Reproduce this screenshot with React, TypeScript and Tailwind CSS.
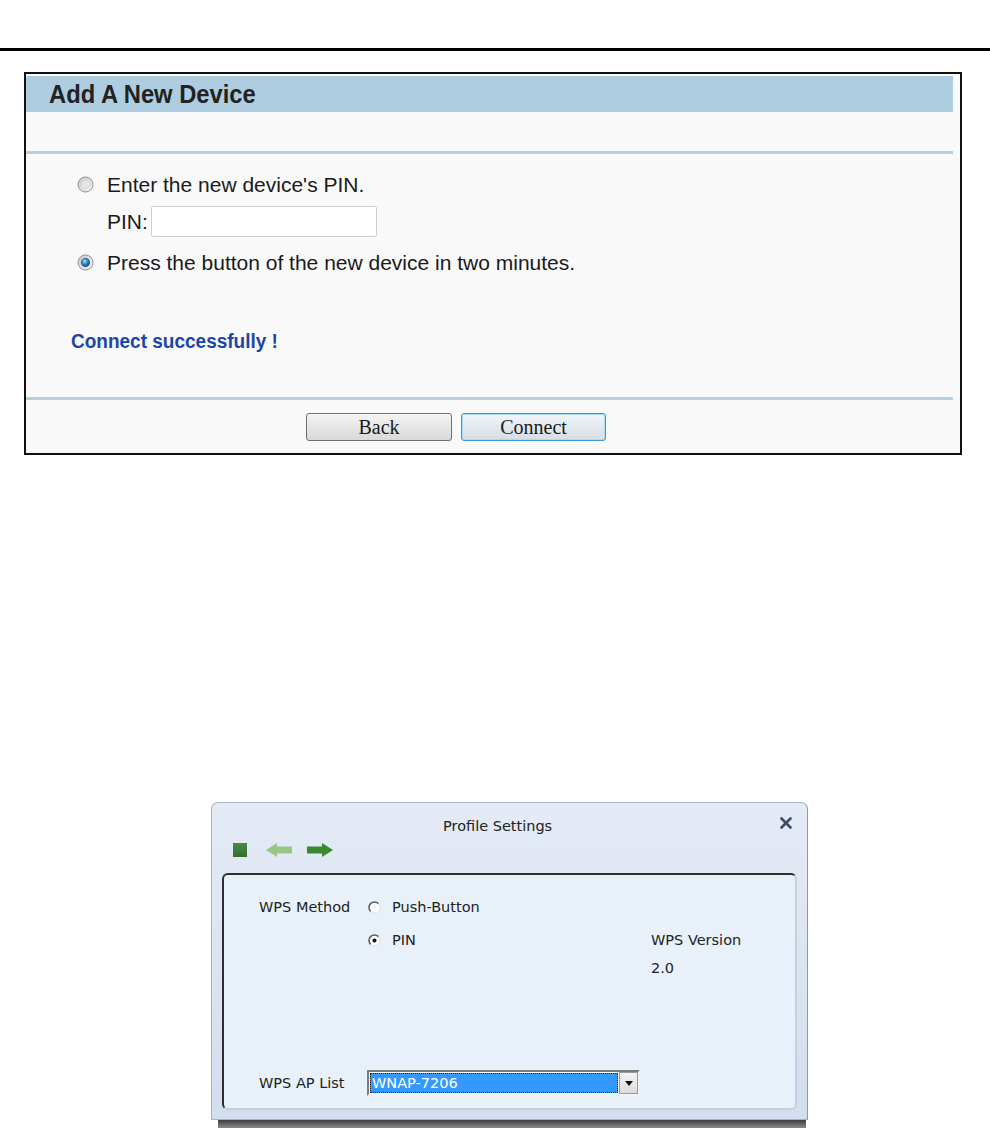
function PanelRadio({ checked, id }: { checked?: boolean; id: string }) {
  return (
    <svg width="17" height="17" viewBox="0 0 17 17" className="shrink-0">
      <defs>
        <linearGradient id={`${id}-ring`} x1="0" y1="0" x2="1" y2="1">
          <stop offset="0" stopColor="#c8c8c8" />
          <stop offset="1" stopColor="#f8f8f8" />
        </linearGradient>
        <radialGradient id={`${id}-dot`} cx="0.4" cy="0.35" r="0.7">
          <stop offset="0" stopColor="#a6e0fb" />
          <stop offset="0.5" stopColor="#2b8bc9" />
          <stop offset="1" stopColor="#0a4b7c" />
        </radialGradient>
      </defs>
      <circle cx="8.5" cy="8.5" r="7.5" fill={`url(#${id}-ring)`} stroke="#8e8f8f" />
      {checked ? (
        <circle cx="8.5" cy="8.5" r="4.2" fill={`url(#${id}-dot)`} stroke="#1e3f5c" strokeWidth="0.6" />
      ) : (
        <circle cx="8.5" cy="8.5" r="4.5" fill="#e6e6e6" stroke="#cacaca" strokeWidth="0.6" />
      )}
    </svg>
  )
}

function ClassicRadio({ checked }: { checked?: boolean }) {
  return (
    <svg width="13" height="13" viewBox="0 0 13 13" className="shrink-0">
      <circle cx="6.5" cy="6.5" r="5.5" fill="#fdfdfd" stroke="#e0e0e0" />
      <path d="M10.4 2.6 A5.5 5.5 0 0 0 2.6 10.4" fill="none" stroke="#5c5c5c" strokeWidth="1.5" />
      {checked && <circle cx="6.5" cy="6.5" r="2" fill="#111" />}
    </svg>
  )
}

function ArrowIcon({ dir, color }: { dir: 'left' | 'right'; color: string }) {
  return (
    <svg width="26" height="14" viewBox="0 0 26 14" className="shrink-0">
      {dir === 'left' ? (
        <polygon points="0,7 11,0 11,3.5 26,3.5 26,10.5 11,10.5 11,14" fill={color} />
      ) : (
        <polygon points="26,7 15,0 15,3.5 0,3.5 0,10.5 15,10.5 15,14" fill={color} />
      )}
    </svg>
  )
}

export default function App() {
  return (
    <div className="h-[1129px] w-[990px] overflow-hidden bg-white">
      {/* rule across the page */}
      <div className="pt-[48px]">
        <div className="h-[3px] bg-black" />
      </div>

      {/* Add A New Device panel */}
      <div className="ml-[24px] mt-[21px] w-[938px] border-2 border-[#111] bg-[#f9f9f9] font-['Liberation_Sans',Arial,sans-serif] text-[#1a1a1a]">
        <div className="mr-[7px] mt-[2px] flex h-[36px] items-center bg-[#aecde1] pl-[23px]">
          <h1 className="origin-left scale-x-95 text-[25px] font-bold leading-none text-[#222]">Add A New Device</h1>
        </div>
        <div className="mr-[7px] mt-[39px] h-[3px] bg-[#b2d1e3]" />

        <div className="pl-[51px]">
          <div className="mt-[15px] flex h-[30px] items-center gap-[13px]">
            <PanelRadio id="r1" />
            <span className="text-[21px] leading-none">Enter the new device's PIN.</span>
          </div>
          <div className="mt-[7px] flex h-[31px] items-center gap-[3px] pl-[30px]">
            <span className="text-[21px] leading-none">PIN:</span>
            <div className="h-[31px] w-[226px] rounded-[2px] border border-[#cfcfcf] bg-white" />
          </div>
          <div className="mt-[10px] flex h-[30px] items-center gap-[13px]">
            <PanelRadio id="r2" checked />
            <span className="text-[21px] leading-none">Press the button of the new device in two minutes.</span>
          </div>
        </div>

        <div className="mt-[51px] flex h-[26px] items-center pl-[45px]">
          <span className="origin-left scale-x-95 text-[20px] font-bold leading-none text-[#1c46a6]">Connect successfully !</span>
        </div>

        <div className="mr-[7px] mt-[43px] h-[3px] bg-[#b2d1e3]" />

        <div className="mt-[13px] flex gap-[9px] pb-[12px] pl-[280px] font-['Liberation_Serif','Times_New_Roman',serif]">
          <button className="h-[28px] w-[146px] rounded-[3px] border border-[#707070] bg-gradient-to-b from-[#f4f4f4] to-[#d9d9d9] text-[20px] leading-none text-[#1a1a1a]">
            Back
          </button>
          <button className="h-[28px] w-[145px] rounded-[3px] border border-[#3c98d4] bg-gradient-to-b from-[#f0f6fa] to-[#d6dde3] text-[20px] leading-none text-[#1a1a1a] shadow-[inset_0_0_0_1px_#a8dcf4]">
            Connect
          </button>
        </div>
      </div>

      {/* Profile Settings dialog */}
      <div className="ml-[211px] mt-[347px] w-[597px] rounded-t-[7px] border border-[#a7b3c4] border-r-[#8e98a6] bg-gradient-to-b from-[#e4ebf6] to-[#d2ddee] font-['DejaVu_Sans',Tahoma,sans-serif] text-[14.5px] text-[#222]">
        <div className="mt-[12px] flex h-[22px] items-center justify-between pl-[231px] pr-[15px]">
          <span className="leading-none">Profile Settings</span>
          <svg width="12" height="12" viewBox="0 0 12 12" className="-mt-[7px]">
            <path d="M1.5 1.5 L10.5 10.5 M10.5 1.5 L1.5 10.5" stroke="#3e4b66" strokeWidth="2.6" strokeLinecap="round" />
          </svg>
        </div>

        <div className="mt-[6px] flex h-[14px] items-center pl-[21px]">
          <div className="h-[14px] w-[14px] bg-gradient-to-b from-[#4a8a42] to-[#356e30]" />
          <div className="ml-[19px]">
            <ArrowIcon dir="left" color="#98c687" />
          </div>
          <div className="ml-[15px]">
            <ArrowIcon dir="right" color="#3a892f" />
          </div>
        </div>

        <div className="mx-[10px] mb-[9px] mt-[16px] rounded-[6px] border-2 border-b-[#c6d0dd] border-l-[#2e2e2e] border-r-[#c6d0dd] border-t-[#2e2e2e] bg-[#e8f1fa] pb-[12px] pl-[35px]">
          <div className="mt-[23px] flex h-[18px] items-center">
            <span className="w-[109px] leading-none">WPS Method</span>
            <ClassicRadio />
            <span className="ml-[11px] leading-none">Push-Button</span>
          </div>
          <div className="mt-[15px] flex h-[18px] items-center">
            <span className="w-[109px]" />
            <div className="flex w-[283px] items-center">
              <ClassicRadio checked />
              <span className="ml-[11px] leading-none">PIN</span>
            </div>
            <span className="leading-none">WPS Version</span>
          </div>
          <div className="mt-[10px] flex h-[18px] items-center pl-[392px]">
            <span className="leading-none">2.0</span>
          </div>
          <div className="mt-[93px] flex h-[26px] items-center">
            <span className="w-[108px] leading-none">WPS AP List</span>
            <div className="flex h-[26px] w-[273px] border-2 border-b-[#f2f2f2] border-l-[#7b7b7b] border-r-[#f2f2f2] border-t-[#7b7b7b] bg-white">
              <div className="m-[1px] flex flex-1 items-center border border-dotted border-[#222] bg-[#3399ff] pl-[1px] leading-none text-white">
                WNAP-7206
              </div>
              <div className="flex w-[19px] items-center justify-center border border-[#9a9a9a] bg-gradient-to-b from-[#f4f4f4] to-[#dcdcdc]">
                <svg width="8" height="5" viewBox="0 0 8 5">
                  <polygon points="0,0 8,0 4,5" fill="#111" />
                </svg>
              </div>
            </div>
          </div>
        </div>
      </div>
      <div className="ml-[218px] h-[8px] w-[588px] bg-gradient-to-b from-[#3f3f3f] to-[#8a8a8a]" />
    </div>
  )
}
